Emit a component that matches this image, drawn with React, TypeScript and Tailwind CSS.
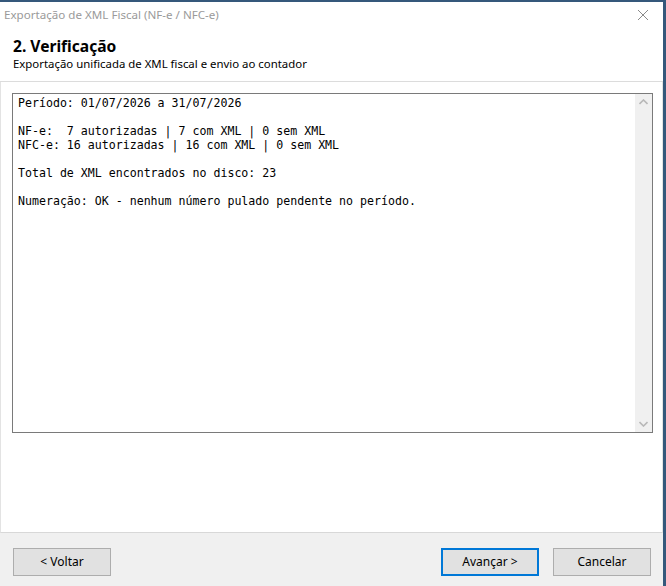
import React from "react";

const ui = { fontFamily: '"Segoe UI", "Noto Sans", "Open Sans", sans-serif' };
const mono = { fontFamily: '"DejaVu Sans Mono", "Liberation Mono", monospace' };

const lines = [
  "Período: 01/07/2026 a 31/07/2026",
  "",
  "NF-e:  7 autorizadas | 7 com XML | 0 sem XML",
  "NFC-e: 16 autorizadas | 16 com XML | 0 sem XML",
  "",
  "Total de XML encontrados no disco: 23",
  "",
  "Numeração: OK - nenhum número pulado pendente no período.",
];

function Button({ label, primary }: { label: string; primary?: boolean }) {
  return (
    <button
      className={
        primary
          ? "w-[98px] h-[28px] bg-[#e1e1e1] border-2 border-[#0078d7] text-[12px] text-black"
          : "w-[98px] h-[28px] bg-[#e1e1e1] border border-[#adadad] text-[12px] text-black"
      }
      style={ui}
    >
      {label}
    </button>
  );
}

export default function App() {
  return (
    <div className="w-[666px] h-[586px] flex flex-col bg-white border-t-2 border-r-[3px] border-[#35587b] overflow-hidden" style={ui}>
      {/* title bar */}
      <div className="h-[25px] flex items-center justify-between pl-[4px] pr-[12px] shrink-0">
        <span className="text-[11.6px] text-[#9a9a9a] leading-none">Exportação de XML Fiscal (NF-e / NFC-e)</span>
        <svg width="12" height="12" viewBox="0 0 12 12" className="mr-[2px]">
          <path d="M1 1 L11 11 M11 1 L1 11" stroke="#8a8a8a" strokeWidth="1" />
        </svg>
      </div>

      {/* wizard header */}
      <div className="h-[55px] shrink-0 pl-[13px] pt-[9px] border-b border-[#dcdcdc]">
        <div className="text-[15.6px] font-bold leading-[20px] text-black">2. Verificação</div>
        <div className="text-[11.4px] leading-[16px] text-black">Exportação unificada de XML fiscal e envio ao contador</div>
      </div>

      {/* content page */}
      <div className="flex-1 flex flex-col border-l border-r border-[#e3e3e3] border-b border-b-[#d8d8d8] pt-[11px] pl-[11px] pr-[9px]">
        <div className="h-[340px] border border-[#7a7a7a] flex bg-white">
          <div className="flex-1 pl-[5px] pt-[2px] text-[11.6px] leading-[14px] text-black whitespace-pre" style={mono}>
            {lines.map((l, i) => (
              <div key={i} className="h-[14px]">{l}</div>
            ))}
          </div>
          <div className="w-[17px] bg-[#f0f0f0] flex flex-col justify-between items-center py-[5px]">
            <svg width="9" height="6" viewBox="0 0 9 6">
              <path d="M0.5 5 L4.5 1 L8.5 5" fill="none" stroke="#b8b8b8" strokeWidth="1.6" />
            </svg>
            <svg width="9" height="6" viewBox="0 0 9 6">
              <path d="M0.5 1 L4.5 5 L8.5 1" fill="none" stroke="#b8b8b8" strokeWidth="1.6" />
            </svg>
          </div>
        </div>
      </div>

      {/* button bar */}
      <div className="h-[53px] shrink-0 bg-[#f0f0f0] flex items-start pt-[15px] pl-[13px] pr-[12px]">
        <Button label="< Voltar" />
        <div className="flex-1" />
        <Button label="Avançar >" primary />
        <div className="w-[14px]" />
        <Button label="Cancelar" />
      </div>
    </div>
  );
}
